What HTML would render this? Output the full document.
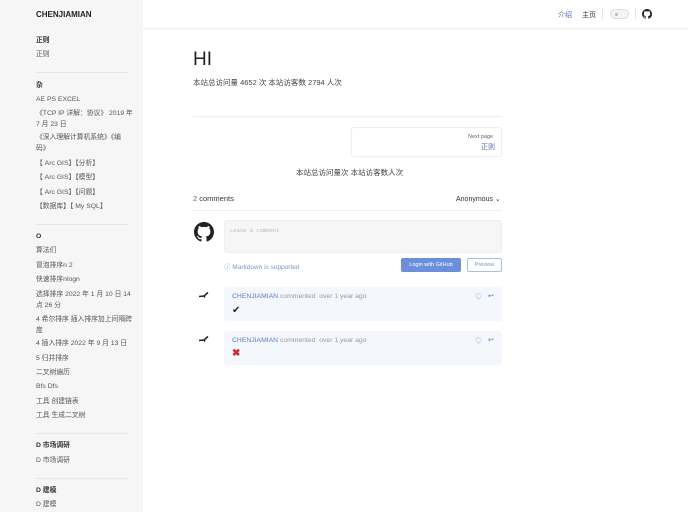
<!DOCTYPE html>
<html><head><meta charset="utf-8"><style>
*{margin:0;padding:0;box-sizing:border-box}
body{width:688px;height:512px;overflow:hidden;background:#fff;font-family:"Liberation Sans","Noto Sans CJK SC",sans-serif;color:#333;position:relative}
.a{position:absolute;white-space:nowrap}
#side{position:absolute;left:0;top:0;width:143px;height:512px;background:#f6f6f7}
.h{font-size:6.8px;font-weight:bold;color:#333;left:36px;line-height:10px;margin-top:1px}
.i{font-size:6.8px;color:#555;left:36px;line-height:10px;margin-top:1px}
.d{position:absolute;left:36px;width:92px;height:1px;background:#e8e8ea}
.blue{color:#4e6fb8}
</style></head><body>
<div id="side">
<div class="a" style="left:36px;top:10px;font-size:8px;font-weight:bold;color:#222">CHENJIAMIAN</div>
<div class="a h" style="top:35px">正则</div>
<div class="a i" style="top:49px">正则</div>
<div class="d" style="top:72px"></div>
<div class="a h" style="top:80px">杂</div>
<div class="a i" style="top:94px">AE PS EXCEL</div>
<div class="a i" style="top:108px">《TCP IP 详解：协议》 2019 年</div>
<div class="a i" style="top:119px">7 月 23 日</div>
<div class="a i" style="top:132px">《深入理解计算机系统》《编</div>
<div class="a i" style="top:143px">码》</div>
<div class="a i" style="top:158px">【 Arc GIS】【分析】</div>
<div class="a i" style="top:172px">【 Arc GIS】【模型】</div>
<div class="a i" style="top:187px">【 Arc GIS】【问题】</div>
<div class="a i" style="top:201px">【数据库】【 My SQL】</div>
<div class="d" style="top:224px"></div>
<div class="a h" style="top:231px">O</div>
<div class="a i" style="top:245px">算法们</div>
<div class="a i" style="top:260px">冒泡排序n 2</div>
<div class="a i" style="top:274px">快速排序nlogn</div>
<div class="a i" style="top:289px">选择排序 2022 年 1 月 10 日 14</div>
<div class="a i" style="top:300px">点 26 分</div>
<div class="a i" style="top:314px">4 希尔排序 插入排序加上间隔跨</div>
<div class="a i" style="top:325px">度</div>
<div class="a i" style="top:338px">4 插入排序 2022 年 9 月 13 日</div>
<div class="a i" style="top:353px">5 归并排序</div>
<div class="a i" style="top:367px">二叉树遍历</div>
<div class="a i" style="top:381px">Bfs Dfs</div>
<div class="a i" style="top:396px">工具 创建链表</div>
<div class="a i" style="top:410px">工具 生成二叉树</div>
<div class="d" style="top:433px"></div>
<div class="a h" style="top:440px">D 市场调研</div>
<div class="a i" style="top:455px">D 市场调研</div>
<div class="d" style="top:478px"></div>
<div class="a h" style="top:485px">D 建模</div>
<div class="a i" style="top:499px">D 建模</div>
</div>
<div class="a" style="left:143px;top:28px;width:545px;height:1px;background:#eee"></div>
<div class="a blue" style="left:558px;top:10px;font-size:7px">介绍</div>
<div class="a" style="left:582px;top:10px;font-size:7px;color:#333">主页</div>
<div class="a" style="left:602px;top:8px;width:1px;height:12px;background:#e5e5e5"></div>
<div class="a" style="left:610px;top:9px;width:19px;height:10px;border-radius:5px;border:1px solid #ddd;background:#f3f3f3"><div style="position:absolute;left:4px;top:3px;width:3px;height:3px;border-radius:50%;background:#bbb"></div></div>
<div class="a" style="left:635px;top:8px;width:1px;height:12px;background:#e5e5e5"></div>
<svg class="a" style="left:642px;top:9px" width="10" height="10" viewBox="0 0 16 16"><path fill="#222" d="M8 0C3.58 0 0 3.58 0 8c0 3.54 2.29 6.53 5.47 7.59.4.07.55-.17.55-.38 0-.19-.01-.82-.01-1.49-2.01.37-2.53-.49-2.69-.94-.09-.23-.48-.94-.82-1.13-.28-.15-.68-.52-.01-.53.63-.01 1.08.58 1.23.82.72 1.21 1.87.87 2.33.66.07-.52.28-.87.51-1.07-1.78-.2-3.64-.89-3.64-3.95 0-.87.31-1.59.82-2.15-.08-.2-.36-1.02.08-2.12 0 0 .67-.21 2.2.82.64-.18 1.32-.27 2-.27.68 0 1.36.09 2 .27 1.53-1.04 2.2-.82 2.2-.82.44 1.1.16 1.92.08 2.12.51.56.82 1.27.82 2.15 0 3.07-1.87 3.75-3.65 3.95.29.25.54.73.54 1.48 0 1.07-.01 1.93-.01 2.2 0 .21.15.46.55.38A8.013 8.013 0 0016 8c0-4.42-3.58-8-8-8z"/></svg>

<div class="a" style="left:193px;top:49px;font-size:19px;color:#222;line-height:22px">HI</div>
<div class="a" style="left:193px;top:77px;font-size:7.5px;color:#444">本站总访问量 4652 次 本站访客数 2794 人次</div>
<div class="a" style="left:193px;top:116px;width:309px;height:1px;background:#eee"></div>
<div class="a" style="left:351px;top:127px;width:151px;height:30px;border:1px solid #eee;border-radius:3px"></div>
<div class="a" style="left:468px;top:134px;font-size:5.5px;color:#666">Next page</div>
<div class="a blue" style="left:481px;top:142px;font-size:7px">正则</div>
<div class="a" style="left:296px;top:167px;font-size:7.5px;color:#444">本站总访问量次 本站访客数人次</div>

<div class="a" style="left:193px;top:194px;font-size:7.5px;color:#333"><span class="blue">2</span> comments</div>
<div class="a" style="left:456px;top:195px;font-size:7px;color:#333">Anonymous ⌄</div>
<div class="a" style="left:193px;top:210px;width:309px;height:1px;background:#eee"></div>
<svg class="a" style="left:194px;top:222px" width="20" height="20" viewBox="0 0 16 16"><path fill="#222" d="M8 0C3.58 0 0 3.58 0 8c0 3.54 2.29 6.53 5.47 7.59.4.07.55-.17.55-.38 0-.19-.01-.82-.01-1.49-2.01.37-2.53-.49-2.69-.94-.09-.23-.48-.94-.82-1.13-.28-.15-.68-.52-.01-.53.63-.01 1.08.58 1.23.82.72 1.21 1.87.87 2.33.66.07-.52.28-.87.51-1.07-1.78-.2-3.64-.89-3.64-3.95 0-.87.31-1.59.82-2.15-.08-.2-.36-1.02.08-2.12 0 0 .67-.21 2.2.82.64-.18 1.32-.27 2-.27.68 0 1.36.09 2 .27 1.53-1.04 2.2-.82 2.2-.82.44 1.1.16 1.92.08 2.12.51.56.82 1.27.82 2.15 0 3.07-1.87 3.75-3.65 3.95.29.25.54.73.54 1.48 0 1.07-.01 1.93-.01 2.2 0 .21.15.46.55.38A8.013 8.013 0 0016 8c0-4.42-3.58-8-8-8z"/></svg>
<div class="a" style="left:224px;top:220px;width:278px;height:33px;background:#f6f6f7;border:1px solid #eceef0;border-radius:3px"></div>
<div class="a" style="left:230px;top:227px;font-size:5.5px;color:#bbb;font-family:'Liberation Mono',monospace">Leave a comment</div>
<div class="a" style="left:224px;top:261px;font-size:6.5px;color:#7a96d4">ⓘ Markdown is supported</div>
<div class="a" style="left:401px;top:258px;width:60px;height:14px;background:#6b8fdc;border-radius:2px;color:#fff;font-size:5.5px;text-align:center;line-height:14px">Login with GitHub</div>
<div class="a" style="left:467px;top:258px;width:35px;height:14px;border:1px solid #a9bdea;border-radius:2px;color:#7a96d4;font-size:5.5px;text-align:center;line-height:12px">Preview</div>

<svg class="a" style="left:198px;top:291px" width="12" height="8" viewBox="0 0 12 8"><path d="M1 5.5 L6 5 L10 1.5 M6 5 L7 6.5" stroke="#222" stroke-width="1.5" fill="none"/></svg>
<div class="a" style="left:224px;top:287px;width:278px;height:34px;background:#f4f7fc;border-radius:3px"></div>
<div class="a" style="left:232px;top:293px;font-size:6.8px"><span style="color:#5b7fcf">CHENJIAMIAN</span> <span style="color:#999">commented &nbsp;over 1 year ago</span></div>
<div class="a" style="left:232px;top:305px;font-size:10px;color:#222">✔</div>
<div class="a" style="left:475px;top:292px;font-size:7px;color:#7a96d4">♡</div>
<div class="a" style="left:488px;top:292px;font-size:7px;color:#5b7fcf">↩</div>

<svg class="a" style="left:198px;top:335px" width="12" height="8" viewBox="0 0 12 8"><path d="M1 5.5 L6 5 L10 1.5 M6 5 L7 6.5" stroke="#222" stroke-width="1.5" fill="none"/></svg>
<div class="a" style="left:224px;top:331px;width:278px;height:34px;background:#f4f7fc;border-radius:3px"></div>
<div class="a" style="left:232px;top:337px;font-size:6.8px"><span style="color:#5b7fcf">CHENJIAMIAN</span> <span style="color:#999">commented &nbsp;over 1 year ago</span></div>
<div class="a" style="left:232px;top:348px;font-size:10px;color:#d22;font-weight:bold">✖</div>
<div class="a" style="left:475px;top:336px;font-size:7px;color:#7a96d4">♡</div>
<div class="a" style="left:488px;top:336px;font-size:7px;color:#5b7fcf">↩</div>
</body></html>
